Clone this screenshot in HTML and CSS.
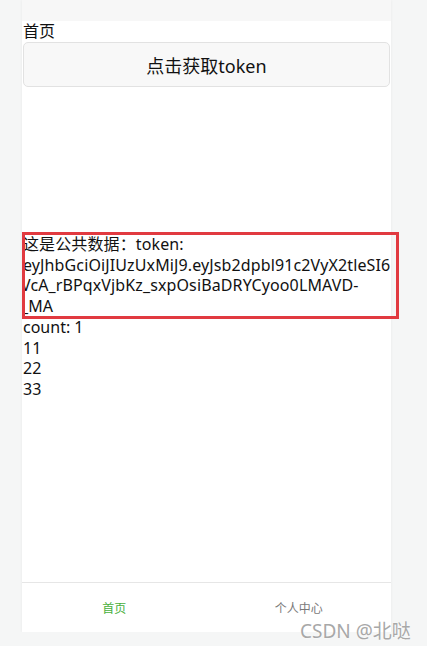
FILE: index.html
```html
<!DOCTYPE html>
<html lang="zh-CN">
<head>
    <meta charset="UTF-8">
    <meta name="viewport" content="width=device-width, initial-scale=1.0">
    <title>首页</title>
    <link rel="stylesheet" href="styles.css">
</head>
<body>
    <div class="phone">
        <div class="nav-bar"></div>
        <div class="page">
            <div class="title">首页</div>
            <button class="token-btn">点击获取token</button>
            <div class="public-data">
                <div>这是公共数据：token:</div>
                <div>eyJhbGciOiJIUzUxMiJ9.eyJsb2dpbl91c2VyX2tleSI6</div>
                <div class="cut">VcA_rBPqxVjbKz_sxpOsiBaDRYCyoo0LMAVD-</div>
                <div class="cut">_MA</div>
            </div>
            <div>count: 1</div>
            <div>11</div>
            <div>22</div>
            <div>33</div>
        </div>
        <div class="tab-bar">
            <div class="tab active">首页</div>
            <div class="tab">个人中心</div>
        </div>
    </div>
    <div class="mark"></div>
    <div class="watermark">CSDN @北哒</div>
</body>
</html>
```

FILE: styles.css
```css
body {
    margin: 0;
    background-color: #f5f6f6;
    font-family: "Noto Sans", "Noto Sans CJK SC", sans-serif;
    color: #111;
}
.phone {
    width: 369px;
    height: 632px;
    margin-left: 22px;
    background-color: #fff;
    display: flex;
    flex-direction: column;
    box-shadow: 0 0 3px rgba(0,0,0,0.06);
}
.nav-bar {
    height: 21px;
    background-color: #f7f7f7;
}
.page {
    flex: 1;
    overflow: hidden;
    font-size: 16px;
    line-height: 20.7px;
    padding-left: 1px;
}
.title {
    line-height: 21px;
}
.token-btn {
    display: block;
    width: 367px;
    height: 45px;
    margin: 0 0 147px 0;
    background-color: #f8f8f8;
    border: 1px solid #e2e2e2;
    border-radius: 5px;
    font-family: inherit;
    font-size: 18px;
    color: #111;
}
.public-data {
    white-space: nowrap;
    letter-spacing: 0.12px;
}
.public-data .cut {
    margin-left: -2px;
}
.tab-bar {
    height: 49px;
    border-top: 1px solid #e6e6e6;
    display: flex;
}
.tab {
    flex: 1;
    display: flex;
    align-items: center;
    justify-content: center;
    font-size: 12px;
    color: #7a7a7a;
}
.tab.active {
    color: #48b03c;
}
.mark {
    position: absolute;
    left: 22px;
    top: 232px;
    width: 371px;
    height: 81px;
    border: 3px solid #e13a40;
}
.watermark {
    position: absolute;
    left: 300px;
    top: 616px;
    font-size: 19px;
    color: #a8a8a8;
    text-shadow: 0 0 2px #fff;
}
```
